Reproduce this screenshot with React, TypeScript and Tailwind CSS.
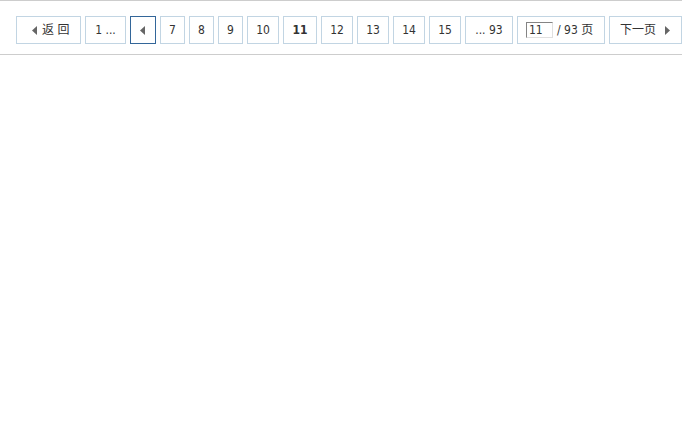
import React from "react";

const font = {
  fontFamily: '"DejaVu Sans Condensed", "DejaVu Sans", "Noto Sans CJK SC", sans-serif',
};

function ArrowLeft() {
  return (
    <svg width="5" height="9" viewBox="0 0 5 9" className="shrink-0">
      <polygon points="5,0 0,4.5 5,9" fill="#666" />
    </svg>
  );
}

function ArrowRight() {
  return (
    <svg width="5" height="9" viewBox="0 0 5 9" className="shrink-0">
      <polygon points="0,0 5,4.5 0,9" fill="#666" />
    </svg>
  );
}

const base =
  "flex h-[28px] items-center justify-center border bg-white text-[#333] leading-[26px] whitespace-nowrap";
const pageBtn = `${base} border-[#c2d5e3]`;

export default function App() {
  const pages: { n: string; w: string }[] = [
    { n: "7", w: "w-[25px]" },
    { n: "8", w: "w-[25px]" },
    { n: "9", w: "w-[25px]" },
    { n: "10", w: "w-[32px]" },
  ];
  const pagesAfter: { n: string; w: string }[] = [
    { n: "12", w: "w-[32px]" },
    { n: "13", w: "w-[32px]" },
    { n: "14", w: "w-[32px]" },
    { n: "15", w: "w-[32px]" },
  ];
  return (
    <div className="min-h-[424px] w-[685px] bg-white text-[12px]" style={font}>
      <div className="flex w-[682px] justify-end gap-[4px] border-y border-[#cdcdcd] pt-[15px] pb-[10px]">
        <a className={`${pageBtn} w-[65px] justify-start pl-[15px]`}>
          <ArrowLeft />
          <span className="ml-[5px]">返 回</span>
        </a>
        <a className={`${pageBtn} w-[41px]`}>1 ...</a>
        <a className={`${base} w-[26px] border-[#336699] pr-[1px]`}>
          <ArrowLeft />
        </a>
        {pages.map((p) => (
          <a key={p.n} className={`${pageBtn} ${p.w}`}>
            {p.n}
          </a>
        ))}
        <strong className={`${base} w-[34px] border-[#c2d5e3] bg-[#e5edf2] font-bold`}>11</strong>
        {pagesAfter.map((p) => (
          <a key={p.n} className={`${pageBtn} ${p.w}`}>
            {p.n}
          </a>
        ))}
        <a className={`${pageBtn} w-[48px]`}>... 93</a>
        <label className={`${pageBtn} w-[88px] justify-start pl-[8px]`}>
          <input
            readOnly
            value="11"
            className="h-[16px] w-[27px] border border-t-[#848484] border-l-[#848484] border-r-[#e0e0e0] border-b-[#e0e0e0] bg-white pl-[2px] text-[12px] leading-[14px] text-[#333] outline-none"
            style={font}
          />
          <span className="ml-[4px]">/ 93 页</span>
        </label>
        <a className={`${pageBtn} w-[73px] justify-start pl-[10px]`}>
          <span>下一页</span>
          <span className="ml-[9px] flex">
            <ArrowRight />
          </span>
        </a>
      </div>
    </div>
  );
}
